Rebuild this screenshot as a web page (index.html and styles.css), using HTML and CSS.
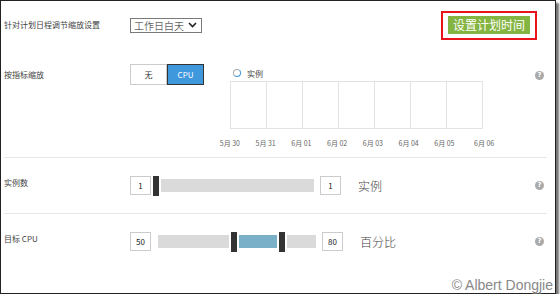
FILE: index.html
```html
<!DOCTYPE html>
<html lang="zh-CN">
<head>
    <meta charset="UTF-8">
    <title>缩放设置</title>
    <link rel="stylesheet" href="styles.css">
</head>
<body>
    <div class="frame">
        <div class="row row-top">
            <div class="label">针对计划日程调节缩放设置</div>
            <div class="select">
                <span>工作日白天</span>
                <svg width="9" height="6" viewBox="0 0 9 6"><path d="M1 1 L4.5 4.5 L8 1" fill="none" stroke="#222" stroke-width="1.6"/></svg>
            </div>
            <div class="spacer"></div>
            <div class="highlight">
                <div class="btn-green">设置计划时间</div>
            </div>
        </div>

        <div class="row row-metric">
            <div class="label">按指标缩放</div>
            <div class="toggle">
                <div class="toggle-item">无</div>
                <div class="toggle-item active">CPU</div>
            </div>
            <div class="chart">
                <div class="legend">
                    <span class="radio"></span>
                    <span>实例</span>
                </div>
                <div class="grid">
                    <div class="cell"></div>
                    <div class="cell"></div>
                    <div class="cell"></div>
                    <div class="cell"></div>
                    <div class="cell"></div>
                    <div class="cell"></div>
                    <div class="cell"></div>
                </div>
                <div class="dates">
                    <span>5月 30</span>
                    <span>5月 31</span>
                    <span>6月 01</span>
                    <span>6月 02</span>
                    <span>6月 03</span>
                    <span>6月 04</span>
                    <span>6月 05</span>
                    <span class="last">6月 06</span>
                </div>
            </div>
            <div class="spacer"></div>
            <div class="help help-top">?</div>
        </div>

        <div class="row row-slider">
            <div class="label">实例数</div>
            <div class="num">1</div>
            <div class="handle h-first"></div>
            <div class="track t-full"></div>
            <div class="num n-right">1</div>
            <div class="unit">实例</div>
            <div class="spacer"></div>
            <div class="help">?</div>
        </div>

        <div class="row row-slider last-row">
            <div class="label">目标 CPU</div>
            <div class="num">50</div>
            <div class="track t-left"></div>
            <div class="handle"></div>
            <div class="range"></div>
            <div class="handle h-second"></div>
            <div class="track t-right"></div>
            <div class="num n-right">80</div>
            <div class="unit">百分比</div>
            <div class="spacer"></div>
            <div class="help">?</div>
        </div>

        <div class="watermark">© Albert Dongjie</div>
    </div>
</body>
</html>
```

FILE: styles.css
```css
body {
    margin: 0;
    background: #fff;
    font-family: "Noto Sans CJK SC", "Noto Sans", sans-serif;
    color: #333;
}
.frame {
    position: relative;
    box-sizing: border-box;
    width: 556px;
    height: 294px;
    border: 1px solid #222;
    box-shadow: 3px 3px 2px rgba(0, 0, 0, 0.55);
    padding-left: 3px;
    background: #fff;
}
.row {
    display: flex;
    margin-right: 8px;
}
.label {
    width: 126px;
    flex-shrink: 0;
    font-size: 8px;
    color: #444;
}
.spacer {
    flex: 1;
}

/* top row */
.row-top {
    height: 49px;
    align-items: center;
}
.row-top .label {
    margin-top: -3px;
}
.select {
    width: 72px;
    height: 15px;
    border: 1px solid #7a7a7a;
    box-sizing: border-box;
    display: flex;
    align-items: center;
    justify-content: space-between;
    padding: 0 4px 0 3px;
    font-size: 10px;
    font-weight: 300;
    color: #222;
    margin-top: -1px;
}
.highlight {
    border: 2px solid #e8141a;
    padding: 3px 5px 4px;
    margin-right: 10px;
    margin-top: -1px;
}
.btn-green {
    background: #84b441;
    color: #fff;
    font-size: 12px;
    width: 82px;
    height: 18px;
    line-height: 18px;
    text-align: center;
}

/* metric row */
.row-metric {
    height: 107px;
    border-bottom: 1px solid #e6e6e6;
}
.row-metric .label {
    padding-top: 19px;
}
.toggle {
    display: flex;
    margin-top: 14px;
    height: 21px;
}
.toggle-item {
    width: 37px;
    height: 21px;
    box-sizing: border-box;
    border: 1px solid #ccc;
    font-size: 8px;
    display: flex;
    align-items: center;
    justify-content: center;
    color: #333;
}
.toggle-item.active {
    background: #3f97dc;
    border: 1px solid #333;
    color: #fff;
}
.chart {
    margin-left: 8px;
    width: 290px;
    display: flex;
    flex-direction: column;
}
.legend {
    display: flex;
    align-items: center;
    gap: 6px;
    margin-left: 21px;
    margin-top: 19px;
    font-size: 8px;
    height: 8px;
    color: #444;
}
.radio {
    width: 6px;
    height: 6px;
    border: 1px solid #aaa;
    border-right-color: #3f97dc;
    border-bottom-color: #3f97dc;
    border-radius: 50%;
}
.grid {
    display: flex;
    margin-left: 18px;
    margin-top: 4px;
    height: 48px;
    border-left: 1px solid #e3e3e3;
}
.cell {
    width: 35px;
    border: 1px solid #e3e3e3;
    border-left: none;
}
.dates {
    display: flex;
    margin-top: 9px;
    font-size: 7px;
    color: #666;
}
.dates span {
    width: 36px;
    text-align: center;
}
.dates .last {
    margin-left: 4px;
}
.help {
    width: 9px;
    height: 9px;
    border-radius: 50%;
    background: #aaa;
    color: #fff;
    font-family: "DejaVu Sans", sans-serif;
    font-weight: bold;
    font-size: 7px;
    line-height: 9px;
    text-align: center;
    margin-right: 3px;
}
.help-top {
    margin-top: 21px;
}

/* slider rows */
.row-slider {
    height: 55px;
    align-items: center;
    border-bottom: 1px solid #e6e6e6;
}
.row-slider .label {
    margin-top: -6px;
}
.last-row {
    border-bottom: none;
}
.num {
    width: 21px;
    height: 19px;
    box-sizing: border-box;
    border: 1px solid #ccc;
    font-size: 8px;
    display: flex;
    align-items: center;
    justify-content: center;
    color: #222;
}
.handle {
    width: 6px;
    height: 20px;
    background: #333;
    margin: 0 2px;
}
.h-first {
    margin-left: 2px;
}
.track {
    height: 13px;
    background: #dadada;
}
.t-full {
    width: 153px;
}
.t-left {
    width: 71px;
    margin-left: 7px;
}
.t-right {
    width: 29px;
}
.range {
    width: 38px;
    height: 13px;
    background: #7bb0c9;
}
.n-right {
    margin-left: 6px;
}
.unit {
    margin-left: 17px;
    font-size: 12px;
    font-weight: 300;
    color: #444;
}

.watermark {
    position: absolute;
    right: 2px;
    bottom: 0;
    font-family: "Liberation Sans", Arial, sans-serif;
    font-size: 14px;
    color: #888;
    text-shadow: 0 0 2px #fff, 0 0 2px #fff;
}
```
